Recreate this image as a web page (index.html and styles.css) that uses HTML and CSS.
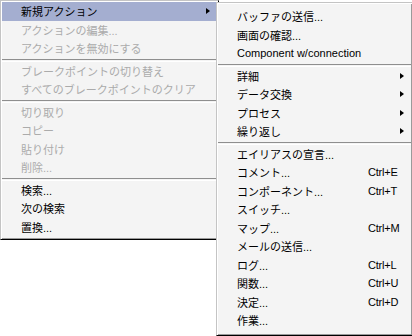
FILE: index.html
```html
<!DOCTYPE html>
<html lang="ja">
<head>
<meta charset="utf-8">
<link rel="stylesheet" href="styles.css">
</head>
<body>
<div class="stage">
  <div class="menu main">
    <div class="item active"><span class="label">新規アクション</span><span class="arrow"></span></div>
    <div class="item disabled"><span class="label">アクションの編集...</span></div>
    <div class="item disabled"><span class="label">アクションを無効にする</span></div>
    <div class="sep"></div>
    <div class="item disabled"><span class="label">ブレークポイントの切り替え</span></div>
    <div class="item disabled"><span class="label">すべてのブレークポイントのクリア</span></div>
    <div class="sep"></div>
    <div class="item disabled"><span class="label">切り取り</span></div>
    <div class="item disabled"><span class="label">コピー</span></div>
    <div class="item disabled"><span class="label">貼り付け</span></div>
    <div class="item disabled"><span class="label">削除...</span></div>
    <div class="sep"></div>
    <div class="item"><span class="label">検索...</span></div>
    <div class="item"><span class="label">次の検索</span></div>
    <div class="item"><span class="label">置換...</span></div>
  </div>
  <div class="menu sub">
    <div class="item"><span class="label">バッファの送信...</span></div>
    <div class="item"><span class="label">画面の確認...</span></div>
    <div class="item"><span class="label">Component w/connection</span></div>
    <div class="sep"></div>
    <div class="item"><span class="label">詳細</span><span class="arrow"></span></div>
    <div class="item"><span class="label">データ交換</span><span class="arrow"></span></div>
    <div class="item"><span class="label">プロセス</span><span class="arrow"></span></div>
    <div class="item"><span class="label">繰り返し</span><span class="arrow"></span></div>
    <div class="sep"></div>
    <div class="item"><span class="label">エイリアスの宣言...</span></div>
    <div class="item"><span class="label">コメント...</span><span class="key">Ctrl+E</span></div>
    <div class="item"><span class="label">コンポーネント...</span><span class="key">Ctrl+T</span></div>
    <div class="item"><span class="label">スイッチ...</span></div>
    <div class="item"><span class="label">マップ...</span><span class="key">Ctrl+M</span></div>
    <div class="item"><span class="label">メールの送信...</span></div>
    <div class="item"><span class="label">ログ...</span><span class="key">Ctrl+L</span></div>
    <div class="item"><span class="label">関数...</span><span class="key">Ctrl+U</span></div>
    <div class="item"><span class="label">決定...</span><span class="key">Ctrl+D</span></div>
    <div class="item"><span class="label">作業...</span></div>
  </div>
</div>
</body>
</html>
```

FILE: styles.css
```css
html, body {
  margin: 0;
  padding: 0;
  background: #ffffff;
}

.stage {
  position: relative;
  width: 412px;
  height: 336px;
  overflow: hidden;
  font-family: "Liberation Sans", "Noto Sans CJK JP", sans-serif;
  font-size: 11px;
  color: #000;
}

.menu {
  box-sizing: border-box;
  background: #f4f4f4;
  border: 1px solid;
  border-color: #c4c4c4 #000 #000 #c4c4c4;
  box-shadow: inset 1px 1px 0 #ffffff, inset -1px -1px 0 #9a9a9a;
  display: flex;
  flex-direction: column;
}

.main {
  width: 219px;
  height: 240px;
  padding: 1px;
}

.sub {
  position: absolute;
  left: 216px;
  top: 2px;
  width: 197px;
  height: 334px;
  padding: 4px 1px 1px 1px;
}

.item {
  display: flex;
  align-items: center;
  height: 18.5px;
  flex: none;
  padding-left: 19px;
  white-space: nowrap;
}

.label {
  width: 131px;
  flex: none;
}

.key {
  font-family: "Liberation Sans", sans-serif;
  letter-spacing: -0.2px;
}

.active {
  background: #a4aed0;
}

.disabled {
  color: #ababab;
}

.arrow {
  margin-left: auto;
  margin-right: 7px;
  width: 0;
  height: 0;
  border-top: 3.5px solid transparent;
  border-bottom: 3.5px solid transparent;
  border-left: 4px solid #000;
}

.sep {
  flex: none;
  box-sizing: border-box;
  height: 3px;
  margin-top: 1px;
  border-top: 1px solid #8e8e8e;
  border-bottom: 1px solid #ffffff;
}
```
